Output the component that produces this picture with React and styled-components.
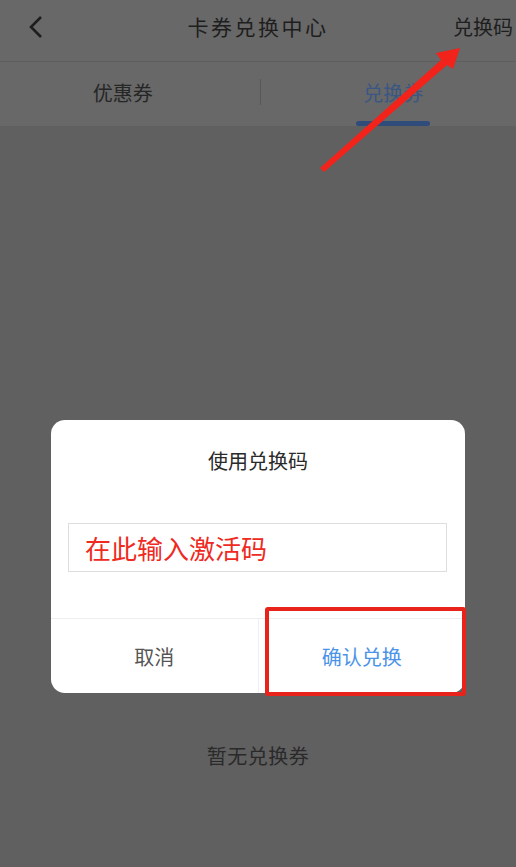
import React from 'react';
import styled, { createGlobalStyle } from 'styled-components';

const Global = createGlobalStyle`
  html, body {
    margin: 0;
    padding: 0;
    background: #606060;
    font-family: "Noto Sans CJK SC", "Noto Sans", sans-serif;
  }
`;

const Page = styled.div`
  position: relative;
  width: 516px;
  height: 867px;
  overflow: hidden;
  background: #606060;
`;

const Header = styled.div`
  height: 61px;
  display: grid;
  grid-template-columns: 80px 1fr 80px;
  align-items: center;
  background: #686868;
  border-bottom: 1px solid #5e5e5e;
`;

const Back = styled.div`
  display: flex;
  align-items: center;
  padding-left: 28px;
  padding-bottom: 8px;
`;

const Title = styled.div`
  text-align: center;
  font-size: 21px;
  letter-spacing: 2.5px;
  color: #1e1e1e;
  padding-bottom: 9px;
`;

const Action = styled.div`
  text-align: right;
  padding-right: 3px;
  font-size: 20px;
  color: #1e1e1e;
  padding-bottom: 9px;
  white-space: nowrap;
`;

const Tabs = styled.div`
  height: 64px;
  display: flex;
  align-items: center;
  background: #686868;
`;

const Tab = styled.div`
  position: relative;
  flex: 1;
  height: 100%;
  display: flex;
  align-items: center;
  justify-content: center;
  font-size: 20px;
  color: ${(p) => (p.active ? '#3a5783' : '#262626')};
  padding-left: ${(p) => (p.active ? '10px' : '0')};
  padding-right: ${(p) => (p.active ? '0' : '14px')};
  box-sizing: border-box;
  padding-bottom: 4px;
`;

const Underline = styled.span`
  position: absolute;
  bottom: 0;
  left: 50%;
  margin-left: -32px;
  width: 74px;
  height: 5px;
  border-radius: 3px;
  background: #2f4c7a;
`;

const TabDivider = styled.div`
  width: 1px;
  height: 26px;
  background: #585858;
  margin-bottom: 4px;
`;

const Body = styled.div`
  display: flex;
  justify-content: center;
  padding-top: 615px;
`;

const Empty = styled.div`
  font-size: 20px;
  color: #2a2a2a;
  letter-spacing: 0.5px;
`;

const Overlay = styled.div`
  position: absolute;
  inset: 0;
  display: flex;
  justify-content: center;
  align-items: flex-start;
  padding-top: 420px;
`;

const Dialog = styled.div`
  position: relative;
  width: 414px;
  height: 273px;
  background: #fff;
  border-radius: 14px;
  display: flex;
  flex-direction: column;
`;

const DialogTitle = styled.div`
  height: 80px;
  display: flex;
  align-items: center;
  justify-content: center;
  font-size: 20px;
  color: #2a2a2a;
`;

const InputBox = styled.div`
  margin: 23px 18px 0 17px;
  height: 47px;
  border: 1.5px solid #dddddd;
  display: flex;
  align-items: center;
  padding-left: 16px;
  font-size: 26px;
  color: #ee2a22;
`;

const Footer = styled.div`
  margin-top: auto;
  height: 74px;
  display: flex;
  border-top: 1px solid #eeeeee;
`;

const FooterButton = styled.div`
  flex: 1;
  display: flex;
  align-items: center;
  justify-content: center;
  font-size: 20px;
  color: ${(p) => (p.primary ? '#4a93e8' : '#555555')};
  border-left: ${(p) => (p.primary ? '1px solid #f0f0f0' : 'none')};
`;

const Highlight = styled.div`
  position: absolute;
  left: 214px;
  top: 187px;
  width: 201px;
  height: 89px;
  box-sizing: border-box;
  border: 4px solid #e8231b;
  border-radius: 3px;
`;

const Arrow = styled.svg`
  position: absolute;
  left: 0;
  top: 0;
  pointer-events: none;
`;

export default function App() {
  return (
    <Page>
      <Global />
      <Header>
        <Back>
          <svg width="16" height="24" viewBox="0 0 16 24">
            <path d="M13 2 L3 12 L13 22" fill="none" stroke="#1e1e1e" strokeWidth="2.6" />
          </svg>
        </Back>
        <Title>卡券兑换中心</Title>
        <Action>兑换码</Action>
      </Header>
      <Tabs>
        <Tab>优惠券</Tab>
        <TabDivider />
        <Tab active>
          兑换券
          <Underline />
        </Tab>
      </Tabs>
      <Body>
        <Empty>暂无兑换券</Empty>
      </Body>
      <Overlay>
        <Dialog>
          <DialogTitle>使用兑换码</DialogTitle>
          <InputBox>在此输入激活码</InputBox>
          <Footer>
            <FooterButton>取消</FooterButton>
            <FooterButton primary>确认兑换</FooterButton>
          </Footer>
          <Highlight />
        </Dialog>
      </Overlay>
      <Arrow width="516" height="867" viewBox="0 0 516 867">
        <polygon
          points="320,168 441,60 436,53 460,48 453,69 447,65 324,172"
          fill="#f1231b"
        />
      </Arrow>
    </Page>
  );
}
